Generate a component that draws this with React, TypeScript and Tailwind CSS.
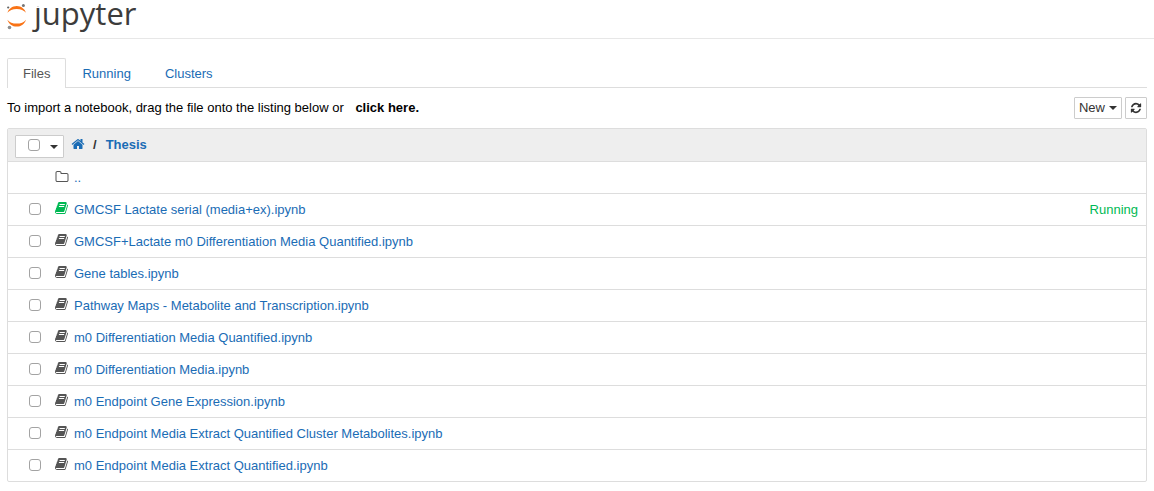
import type { ReactNode } from "react";

const ICONS = {
  book: "M1639 478q40 57 18 129l-275 906q-19 64-76.5 107.5t-122.5 43.5h-923q-77 0-148.5-53.5t-99.5-131.5q-24-67-2-127 0-4 3-27t4-37q1-8-3-21.5t-3-19.5q2-11 8-21t16.5-23.5 16.5-23.5q23-38 45-91.5t30-91.5q3-10 .5-30t-.5-28q3-11 17-28t17-23q21-36 42-92t25-90q1-9-2.5-32t.5-28q4-13 22-30.5t22-22.5q19-26 42.5-84.5t27.5-96.5q1-8-3-25.5t-2-26.5q2-8 9-18t18-23 17-21q8-12 16.5-30.5t15-35 16-36 19.5-32 26.5-23.5 36-11.5 47.5 5.5l-1 3q38-9 51-9h761q74 0 114 56t18 130l-274 906q-36 119-71.5 153.5t-128.5 34.5h-869q-27 0-38 15-11 16-1 43 24 70 144 70h923q29 0 56-15.5t35-41.5l300-987q7-22 5-57 38 15 59 43zm-1064 2q-4 13 2 22.5t20 9.5h608q13 0 25.5-9.5t16.5-22.5l21-64q4-13-2-22.5t-20-9.5h-608q-13 0-25.5 9.5t-16.5 22.5zm-83 256q-4 13 2 22.5t20 9.5h608q13 0 25.5-9.5t16.5-22.5l21-64q4-13-2-22.5t-20-9.5h-608q-13 0-25.5 9.5t-16.5 22.5z",
  home: "M1472 992v480q0 26-19 45t-45 19h-384v-384h-256v384h-384q-26 0-45-19t-19-45v-480q0-1 .5-3t.5-3l575-474 575 474q1 2 1 6zm223-69l-62 74q-8 9-21 11h-3q-13 0-21-7l-692-577-692 577q-12 8-24 7-13-2-21-11l-62-74q-8-10-7-23.5t11-21.5l719-599q32-26 76-26t76 26l244 204v-195q0-14 9-23t23-9h192q14 0 23 9t9 23v408l219 182q10 8 11 21.5t-7 23.5z",
  refresh:
    "M1639 1056q0 5-1 7-64 268-268 434.5t-478 166.5q-146 0-282.5-55t-243.5-157l-129 129q-19 19-45 19t-45-19-19-45v-448q0-26 19-45t45-19h448q26 0 45 19t19 45-19 45l-137 137q71 66 161 102t187 36q134 0 250-65t186-179q11-17 53-117 8-23 30-23h192q13 0 22.5 9.5t9.5 22.5zm25-800v448q0 26-19 45t-45 19h-448q-26 0-45-19t-19-45 19-45l138-138q-148-137-349-137-134 0-250 65t-186 179q-11 17-53 117-8 23-30 23h-199q-13 0-22.5-9.5t-9.5-22.5v-7q65-268 270-434.5t480-166.5q146 0 284 55.5t245 156.5l130-129q19-19 45-19t45 19 19 45z",
  folder:
    "M1600 1312v-704q0-40-28-68t-68-28h-704q-40 0-68-28t-28-68v-64q0-40-28-68t-68-28h-320q-40 0-68 28t-28 68v960q0 40 28 68t68 28h1216q40 0 68-28t28-68zm128-704v704q0 92-66 158t-158 66h-1216q-92 0-158-66t-66-158v-960q0-92 66-158t158-66h320q92 0 158 66t66 158v32h672q92 0 158 66t66 158z",
};

function Icon({ name, className }: { name: keyof typeof ICONS; className: string }) {
  return (
    <svg viewBox="0 0 1792 1792" fill="currentColor" aria-hidden="true" className={`shrink-0 ${className}`}>
      <path d={ICONS[name]} />
    </svg>
  );
}

function Caret() {
  return (
    <svg viewBox="0 0 8 4" fill="currentColor" aria-hidden="true" className="h-1 w-2 shrink-0">
      <path d="M0 0h8L4 4z" />
    </svg>
  );
}

function Checkbox({ label }: { label: string }) {
  return (
    <input
      type="checkbox"
      aria-label={label}
      className="mb-0.5 size-3 shrink-0 appearance-none rounded-[3px] border border-[#a3a3a3] bg-white checked:bg-[#1a6cb5]"
    />
  );
}

function Logo() {
  return (
    <a href="#home" className="flex items-start text-[#3c3c3c]">
      <svg viewBox="0 0 20 32" aria-hidden="true" className="h-8 w-5">
        <path d="M.4 12.800C1.600 8.700 5.300 5.900 9.700 5.900s8.100 2.800 9.300 6.900C17 10.300 13.700 8.900 9.700 8.900S2.400 10.300.4 12.800z" fill="#f97316" />
        <path d="M.4 19.700c1.200 4.100 4.900 6.900 9.300 6.900s8.100-2.800 9.300-6.900c-2 2.500-5.300 3.900-9.300 3.900S2.400 22.200.4 19.700z" fill="#f97316" />
        <circle cx="16.400" cy="5.500" r="1.500" fill="#767677" />
        <circle cx="2.500" cy="27.500" r="1.800" fill="#8e8e8e" />
        <circle cx="1.200" cy="7.500" r="1.100" fill="#616262" />
      </svg>
      <span className="pl-[7px] font-['Open_Sans','Noto_Sans',sans-serif] text-[31px] leading-[26px] font-medium">
        <span className="inline-block [clip-path:inset(6px_0_-12px_-8px)]">j</span>upyter
      </span>
    </a>
  );
}

function Row({ children }: { children: ReactNode }) {
  return <li className="flex h-8 items-center border-t border-[#ddd] pr-2 pl-[21px]">{children}</li>;
}

const files = [
  { name: "GMCSF Lactate serial (media+ex).ipynb", running: true },
  { name: "GMCSF+Lactate m0 Differentiation Media Quantified.ipynb" },
  { name: "Gene tables.ipynb" },
  { name: "Pathway Maps - Metabolite and Transcription.ipynb" },
  { name: "m0 Differentiation Media Quantified.ipynb" },
  { name: "m0 Differentiation Media.ipynb" },
  { name: "m0 Endpoint Gene Expression.ipynb" },
  { name: "m0 Endpoint Media Extract Quantified Cluster Metabolites.ipynb" },
  { name: "m0 Endpoint Media Extract Quantified.ipynb" },
];

export default function App() {
  return (
    <div className="min-h-screen bg-white font-['Liberation_Sans',Arial,sans-serif] text-[13px] leading-5 text-black">
      <header className="flex h-[39px] items-start border-b border-[#e7e7e7] px-[7px]">
        <Logo />
      </header>

      <main className="px-[7px] pt-[19px] pb-2">
        <nav className="flex border-b border-[#ddd] text-[#1a6cb5]">
          <a href="#files" className="-mb-px rounded-t-xs border border-b-0 border-[#ddd] bg-white px-[15px] pt-1 pb-1 leading-[21px] text-[#555]">
            Files
          </a>
          <a href="#running" className="px-4 pt-[5px] leading-[21px]">
            Running
          </a>
          <a href="#clusters" className="ml-0.5 px-4 pt-[5px] leading-[21px]">
            Clusters
          </a>
        </nav>

        <div className="flex items-center justify-between py-[9px]">
          <p>
            To import a notebook, drag the file onto the listing below or{" "}
            <button type="button" className="ml-2 font-bold">
              click here.
            </button>
          </p>
          <div className="flex gap-[3px] text-[#333]">
            <button type="button" className="flex h-[22px] items-center gap-1 rounded-[1px] border border-[#ccc] bg-white px-1">
              New
              <Caret />
            </button>
            <button type="button" aria-label="Refresh" className="flex h-[22px] items-center rounded-[1px] border border-[#ccc] bg-white px-1">
              <Icon name="refresh" className="size-3" />
            </button>
          </div>
        </div>

        <section className="rounded-xs border border-[#ddd]">
          <div className="flex h-8 items-center bg-[#eee] px-[7px] font-bold">
            <div className="mt-0.5 flex h-[23px] items-center rounded-[1px] border border-[#ccc] bg-white pr-[5px] pl-3 text-[#333]">
              <Checkbox label="Select all" />
              <button type="button" aria-label="Selection options" className="flex h-5 items-center pt-0.5 pl-[10px]">
                <Caret />
              </button>
            </div>
            <a href="#root" aria-label="Home" className="mb-0.5 ml-[7px] text-[#1a6cb5]">
              <Icon name="home" className="size-[14px]" />
            </a>
            <span className="pr-[9px] pl-2 text-[#333]">/</span>
            <a href="#thesis" className="text-[#1a6cb5]">
              Thesis
            </a>
          </div>
          <ul>
            <Row>
              <Icon name="folder" className="mb-0.5 ml-[26px] size-[14px] text-[#555]" />
              <a href="#up" className="ml-[5px] text-[#1a6cb5]">
                ..
              </a>
            </Row>
            {files.map((file) => (
              <Row key={file.name}>
                <Checkbox label={`Select ${file.name}`} />
                <Icon name="book" className={file.running ? "mb-1 ml-[14px] size-[14px] text-[#00b954]" : "mb-1 ml-[14px] size-[14px] text-[#555]"} />
                <a href="#notebook" className="ml-[5px] text-[#1a6cb5]">
                  {file.name}
                </a>
                {file.running && <span className="ml-auto text-[#00b954]">Running</span>}
              </Row>
            ))}
          </ul>
        </section>
      </main>
    </div>
  );
}
